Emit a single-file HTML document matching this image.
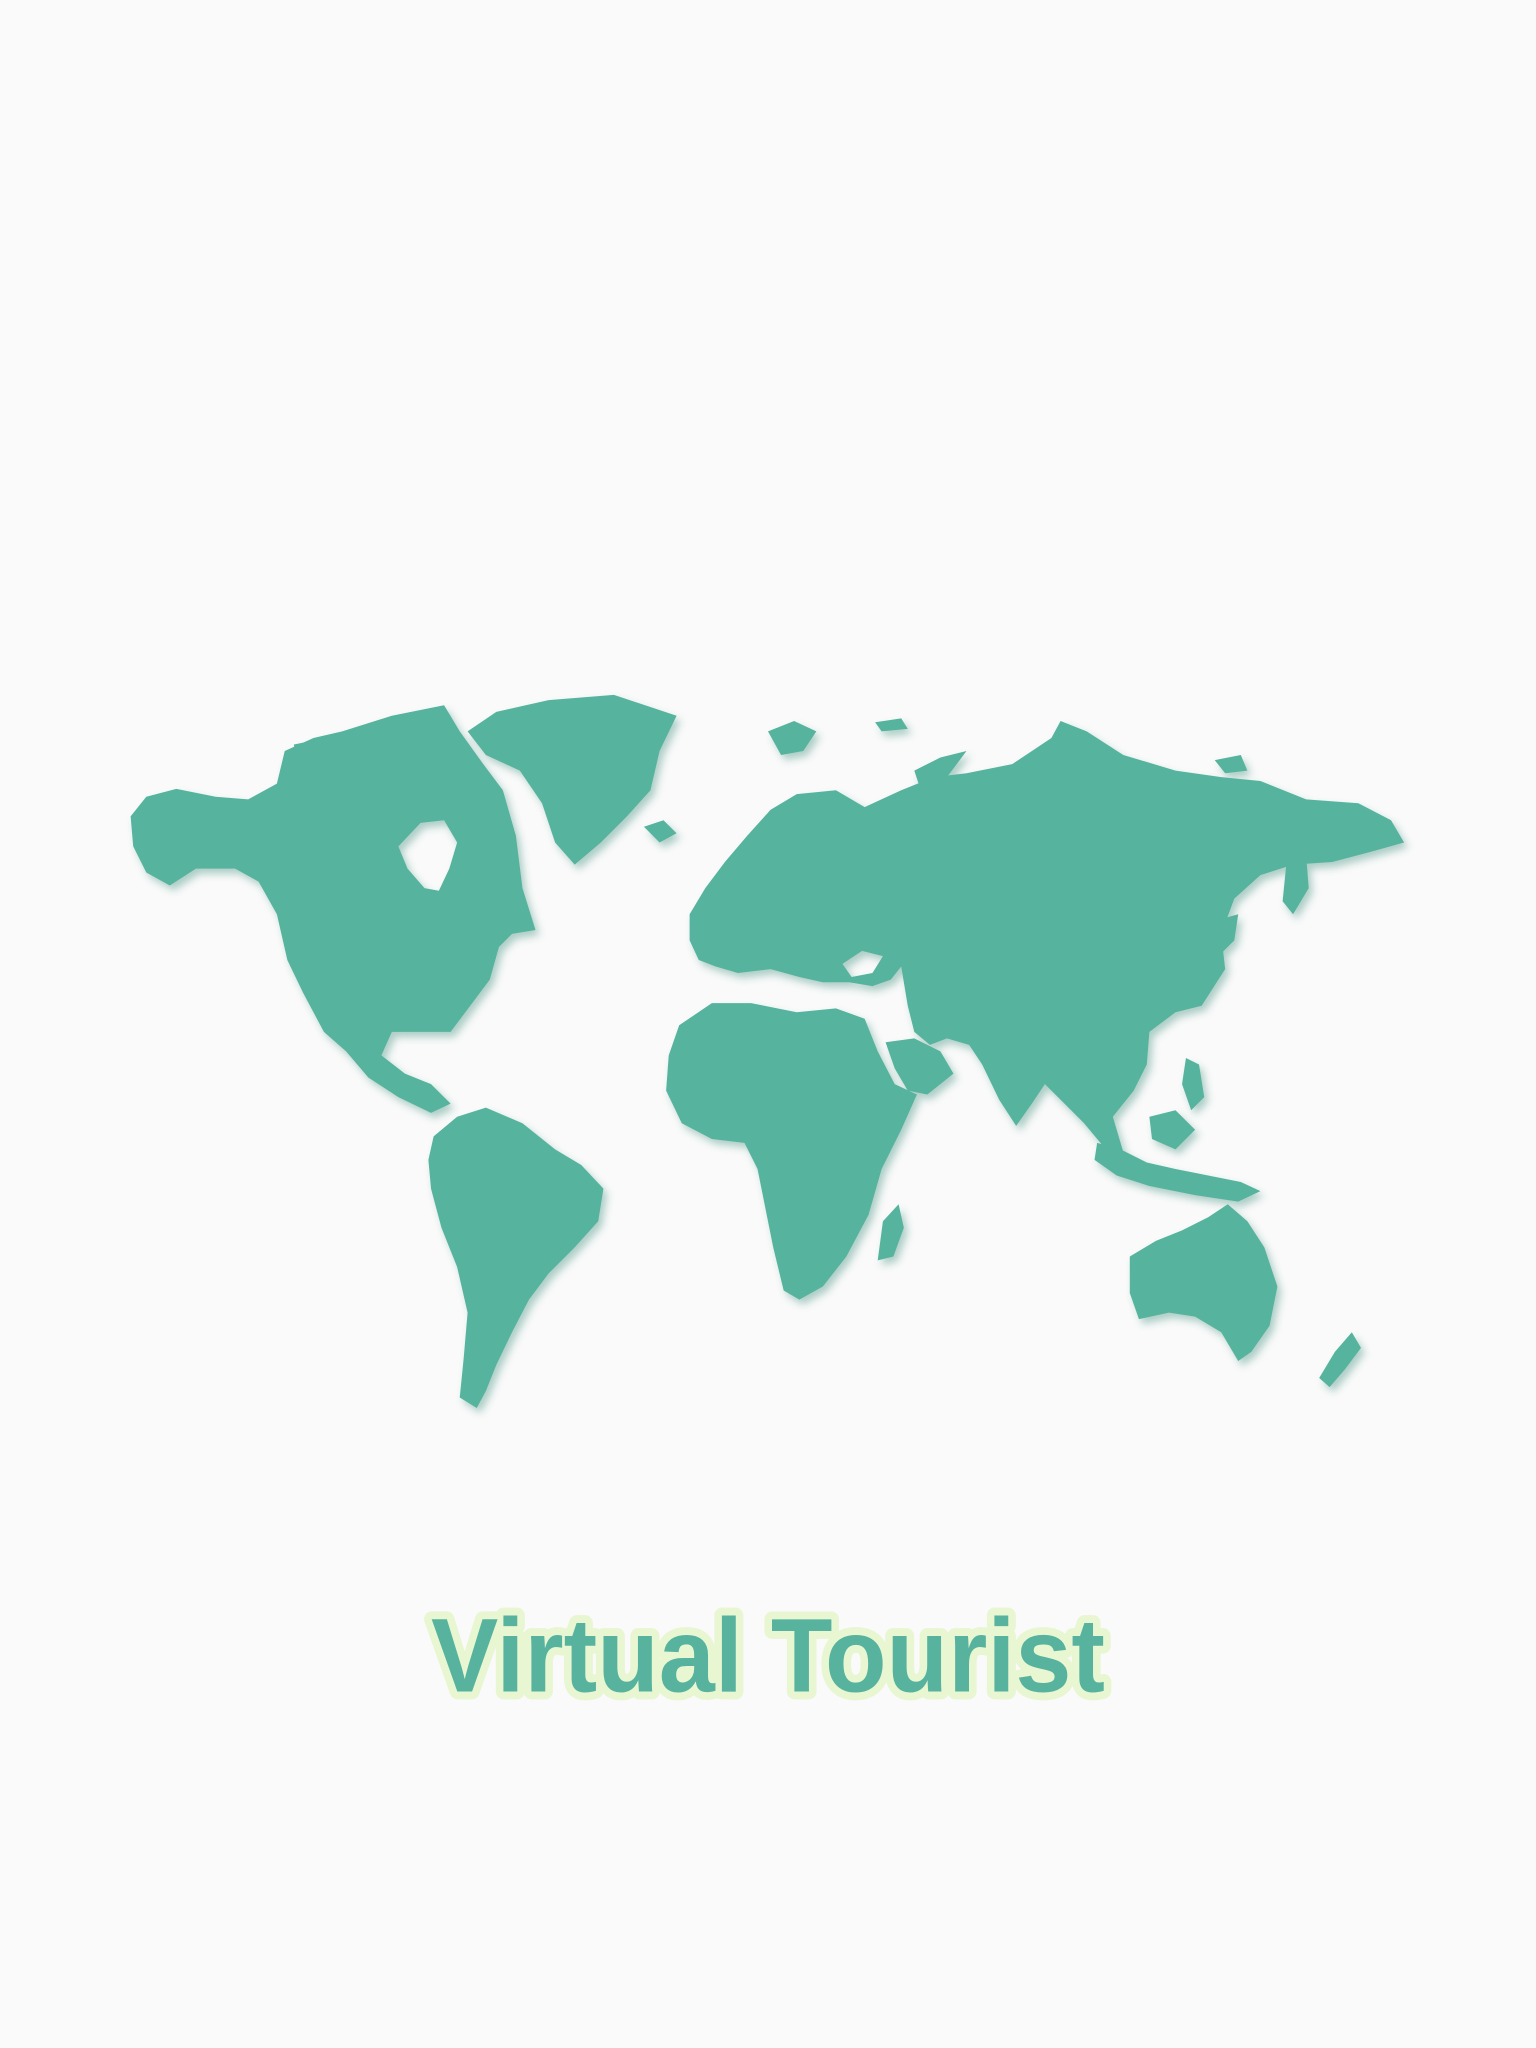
<!DOCTYPE html>
<html><head><meta charset="utf-8"><style>
html,body{margin:0;padding:0;background:#fafafa;}
svg{display:block}
</style></head><body>
<svg width="1536" height="2048" viewBox="0 0 1176 1568" xmlns="http://www.w3.org/2000/svg">
<defs>
<filter id="sh" x="-10%" y="-10%" width="120%" height="120%">
<feDropShadow dx="3" dy="4" stdDeviation="3" flood-color="#3a8a77" flood-opacity="0.4"/>
</filter>
</defs>
<rect width="1176" height="1568" fill="#fafafa"/>
<g fill="#57b39e" filter="url(#sh)" fill-rule="evenodd">
<path d="M100,625 L112,610 L135,604 L165,610 L190,612 L212,600 L218,575 L240,565 L262,560 L300,548 L340,540 L352,560 L370,585 L385,605 L395,640 L400,680 L410,712 L392,715 L382,725 L375,750 L360,770 L345,790 L320,790 L300,790 L292,808 L310,822 L330,830 L345,845 L330,852 L305,840 L282,825 L265,805 L248,790 L232,760 L220,735 L212,700 L198,675 L180,665 L150,665 L130,678 L112,668 L102,648 Z M305,648 L322,630 L340,628 L350,645 L344,665 L336,682 L325,680 L312,665 Z"/>
<path d="M358,560 L380,545 L420,536 L470,532 L518,548 L505,575 L498,605 L480,625 L460,645 L440,662 L425,645 L415,615 L398,590 L372,578 Z"/>
<path d="M493,633 L508,628 L518,638 L505,645 Z"/>
<path d="M332,870 L350,855 L372,848 L400,860 L425,880 L445,892 L462,910 L458,935 L440,955 L420,975 L405,995 L392,1020 L380,1045 L372,1065 L365,1078 L352,1070 L355,1040 L358,1005 L350,970 L338,940 L330,910 L328,888 Z"/>
<path d="M528,700 L540,680 L555,660 L572,640 L590,620 L610,608 L640,605 L662,618 L690,605 L715,595 L740,592 L775,585 L805,565 L812,552 L832,560 L860,578 L900,590 L935,595 L965,598 L1000,612 L1040,615 L1065,628 L1075,645 L1050,652 L1020,660 L990,662 L965,670 L945,688 L935,715 L938,742 L920,770 L900,775 L880,790 L878,815 L868,835 L852,855 L860,882 L845,878 L830,860 L815,845 L800,830 L790,845 L778,862 L765,842 L752,815 L742,800 L725,795 L712,800 L700,790 L695,770 L690,740 L682,750 L668,755 L650,752 L630,752 L612,748 L590,742 L565,745 L548,740 L535,735 L528,720 Z M645,738 L660,728 L676,732 L668,745 L652,748 Z"/>
<path d="M540,680 L552,668 L560,685 L556,702 L545,700 Z"/>
<path d="M520,785 L545,768 L575,768 L610,775 L640,772 L662,780 L672,805 L685,830 L702,838 L690,865 L675,895 L665,930 L648,962 L630,985 L612,995 L600,988 L592,955 L585,920 L580,895 L570,875 L545,872 L522,860 L510,835 L512,808 Z"/>
<path d="M678,798 L700,795 L720,805 L730,822 L710,838 L695,835 L685,818 Z"/>
<path d="M676,935 L688,922 L692,940 L684,962 L672,965 Z"/>
<path d="M918,720 L930,705 L948,700 L945,720 L925,740 L912,745 Z"/>
<path d="M985,660 L1000,655 L1002,680 L990,700 L982,690 Z"/>
<path d="M840,875 L858,880 L878,890 L900,895 L925,900 L950,905 L965,912 L948,920 L915,915 L880,908 L855,900 L838,888 Z"/>
<path d="M880,855 L900,850 L915,865 L900,880 L882,872 Z"/>
<path d="M908,810 L918,815 L922,840 L912,850 L905,830 Z"/>
<path d="M865,962 L885,950 L905,942 L925,932 L940,922 L955,935 L968,955 L978,985 L972,1015 L958,1035 L948,1042 L935,1020 L915,1008 L895,1005 L872,1010 L865,990 Z"/>
<path d="M1010,1055 L1022,1035 L1035,1020 L1042,1032 L1030,1048 L1018,1062 Z"/>
<path d="M588,560 L608,552 L625,560 L615,575 L598,578 Z"/>
<path d="M700,590 L720,580 L740,575 L725,595 L705,605 Z"/>
<path d="M670,553 L690,550 L695,558 L675,560 Z"/>
<path d="M225,570 L250,565 L260,590 L240,600 L228,590 Z"/>
<path d="M268,565 L290,560 L300,585 L285,600 L272,590 Z"/>
<path d="M930,582 L950,578 L955,590 L938,592 Z"/>
</g>
<text x="588" y="1295" text-anchor="middle" font-family="'Liberation Sans', sans-serif" font-weight="bold" font-size="80" textLength="516" lengthAdjust="spacingAndGlyphs" fill="#57b39e" stroke="#e8f6d2" stroke-width="12" stroke-linejoin="round" paint-order="stroke">Virtual Tourist</text>
</svg>
</body></html>
